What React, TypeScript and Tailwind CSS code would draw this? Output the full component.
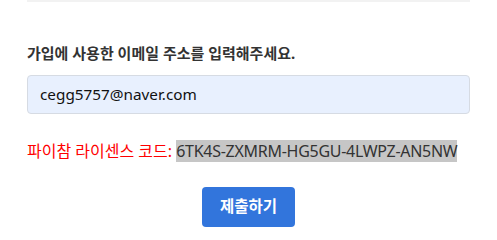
export default function App() {
  return (
    <div className="w-[497px] h-[240px] bg-white px-[27px] font-['Noto_Sans','Noto_Sans_CJK_KR',sans-serif] overflow-hidden">
      <div className="border-t-2 border-[#f2f2f2]" />
      <div className="pt-[40px] text-[15px] font-bold text-[#333] leading-[22px]">
        가입에 사용한 이메일 주소를 입력해주세요.
      </div>
      <div className="mt-[11px] h-[39px] rounded-[4px] border border-[#d6dbe3] bg-[#e8f0fe] px-[12px] flex items-center text-[15.3px] text-[#111]">
        cegg5757@naver.com
      </div>
      <div className="mt-[25px] text-[16px] leading-[24px]">
        <span className="text-[#ff0000]">파이참 라이센스 코드: </span>
        <span className="bg-[#c6c6c6] text-[#333] tracking-[-0.28px]">6TK4S-ZXMRM-HG5GU-4LWPZ-AN5NW</span>
      </div>
      <div className="mt-[24px] flex justify-center">
        <button className="w-[93px] h-[40px] rounded-[4px] bg-[#3275dc] text-white text-[15.5px] font-bold">
          제출하기
        </button>
      </div>
    </div>
  )
}
